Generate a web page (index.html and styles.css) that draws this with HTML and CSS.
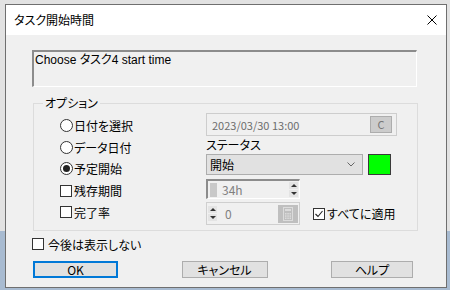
FILE: index.html
```html
<!DOCTYPE html>
<html lang="ja">
<head>
  <meta charset="UTF-8">
  <title>タスク開始時間</title>
  <link rel="stylesheet" href="styles.css">
</head>
<body>

<div class="window">
  <div class="titlebar">
    <span class="title">タスク開始時間</span>
    <svg class="close" viewBox="0 0 10 10" width="10" height="10">
      <path d="M0.5 0.5 L9.5 9.5 M9.5 0.5 L0.5 9.5" stroke="#000" stroke-width="1" fill="none"/>
    </svg>
  </div>

  <div class="content">
    <div class="desc">Choose タスク4 start time</div>

    <fieldset class="options">
      <legend>オプション</legend>
      <div class="cols">
        <div class="left">
          <label class="opt"><span class="radio"></span>日付を選択</label>
          <label class="opt"><span class="radio"></span>データ日付</label>
          <label class="opt"><span class="radio on"></span>予定開始</label>
          <label class="opt"><span class="check"></span>残存期間</label>
          <label class="opt"><span class="check"></span>完了率</label>
        </div>

        <div class="right">
          <div class="date">
            <span>2023/03/30 13:00</span>
            <span class="cbtn">C</span>
          </div>
          <div class="status-label">ステータス</div>
          <div class="status-row">
            <div class="select">
              <span>開始</span>
              <svg viewBox="0 0 8 5" width="8" height="5">
                <path d="M0.5 0.5 L4 4 L7.5 0.5" stroke="#666" fill="none"/>
              </svg>
            </div>
            <span class="swatch"></span>
          </div>
          <div class="spin spin-dur">
            <span class="block"></span>
            <span class="val">34h</span>
            <span class="arrows"><span class="up"></span><span class="down"></span></span>
          </div>
          <div class="pct-row">
            <div class="spin spin-pct">
              <span class="arrows"><span class="up"></span><span class="down"></span></span>
              <span class="val">0</span>
              <span class="calc">
                <svg viewBox="0 0 20 18" width="20" height="18">
                  <rect x="5.5" y="2.5" width="9" height="13" fill="none" stroke="#dcdcdc"/>
                  <rect x="7" y="4" width="6" height="2" fill="#dcdcdc"/>
                  <rect x="7" y="8" width="1.5" height="1.5" fill="#dcdcdc"/>
                  <rect x="9.3" y="8" width="1.5" height="1.5" fill="#dcdcdc"/>
                  <rect x="11.5" y="8" width="1.5" height="1.5" fill="#dcdcdc"/>
                  <rect x="7" y="10.3" width="1.5" height="1.5" fill="#dcdcdc"/>
                  <rect x="9.3" y="10.3" width="1.5" height="1.5" fill="#dcdcdc"/>
                  <rect x="11.5" y="10.3" width="1.5" height="1.5" fill="#dcdcdc"/>
                  <rect x="7" y="12.5" width="1.5" height="1.5" fill="#dcdcdc"/>
                  <rect x="9.3" y="12.5" width="1.5" height="1.5" fill="#dcdcdc"/>
                  <rect x="11.5" y="12.5" width="1.5" height="1.5" fill="#dcdcdc"/>
                </svg>
              </span>
            </div>
            <label class="opt apply">
              <span class="check">
                <svg viewBox="0 0 10 10" width="10" height="10">
                  <path d="M1.5 5 L4 7.5 L8.5 2" stroke="#222" stroke-width="1.1" fill="none"/>
                </svg>
              </span>すべてに適用
            </label>
          </div>
        </div>
      </div>
    </fieldset>

    <label class="opt dontshow"><span class="check"></span>今後は表示しない</label>

    <div class="buttons">
      <button class="btn default ok">OK</button>
      <button class="btn cancel">キャンセル</button>
      <button class="btn help">ヘルプ</button>
    </div>
  </div>
</div>

</body>
</html>
```

FILE: styles.css
```css
* { box-sizing: border-box; margin: 0; padding: 0; }
body {
  width: 450px; height: 290px; overflow: hidden;
  padding: 4px 0 0 5px;
  background: linear-gradient(#e2e2e2 0, #e2e2e2 231px, #a8bbd1 231px);
  font-family: "Noto Sans CJK JP", "Liberation Sans", sans-serif;
  font-size: 12px;
  font-feature-settings: "palt";
  color: #000;
}

.window {
  width: 442px;
  height: 284px;
  border: 1px solid #6f6f6f;
  background: #f0f0f0;
}

/* タイトルバー */
.titlebar {
  height: 30px;
  background: #fff;
  display: flex;
  align-items: center;
  justify-content: space-between;
  padding: 0 9px 0 8px;
}
.title { line-height: 16px; }
.close { display: block; }

.content { padding: 15px 0 0 26px; }

.desc {
  width: 385px;
  height: 37px;
  border-top: 2px solid #8c8c8c;
  border-left: 2px solid #8c8c8c;
  border-right: 1px solid #fff;
  border-bottom: 1px solid #fff;
  padding: 1px;
  line-height: 14px;
  font-family: "Liberation Sans", "Noto Sans CJK JP", sans-serif;
}

/* オプション枠 */
.options {
  margin: 9px 0 0 1px;
  width: 385px;
  border: 1px solid #dcdcdc;
  padding: 3px 0 5px 0;
}
.options legend {
  margin-left: 9px;
  padding: 0 2px;
  line-height: 14px;
}
.cols { display: flex; padding-left: 26px; }
.left { width: 146px; padding-top: 1.5px; }

.opt {
  display: flex;
  align-items: center;
  gap: 1px;
  height: 21.75px;
  white-space: nowrap;
}
.radio {
  width: 13px; height: 13px;
  border: 1px solid #333;
  border-radius: 50%;
  background: #fff;
  display: flex; align-items: center; justify-content: center;
}
.radio.on::after {
  content: "";
  width: 7px; height: 7px;
  border-radius: 50%;
  background: #222;
}
.check {
  width: 12px; height: 12px;
  margin-right: 1px;
  border: 1px solid #333;
  background: #fff;
  display: flex; align-items: center; justify-content: center;
}

/* 右側 */
.right { width: 191px; }
.date {
  height: 23px;
  border: 1px solid #cdcdcd;
  display: flex;
  align-items: center;
  justify-content: space-between;
  padding: 0 4px 0 5px;
  color: #6d6d6d;
  font-size: 11px;
}
.cbtn {
  width: 22px; height: 17px;
  background: #ccc;
  border: 1px solid #adadad;
  color: #777;
  text-align: center;
  line-height: 15px;
}
.status-label { height: 18px; line-height: 18px; }
.status-row { display: flex; gap: 5px; }
.select {
  width: 157px; height: 21px;
  background: #e1e1e1;
  border: 1px solid #adadad;
  display: flex;
  align-items: center;
  justify-content: space-between;
  padding: 0 7px 0 3px;
}
.select svg { display: block; }
.swatch {
  width: 23px; height: 21px;
  border: 1px solid #3a3a3a;
  background: #00ff00;
}

.spin { width: 94px; display: flex; align-items: center; color: #808080; }
.spin-dur {
  height: 20px;
  margin-top: 4px;
  border-top: 2px solid #8c8c8c;
  border-left: 2px solid #8c8c8c;
  border-right: 1px solid #fff;
  border-bottom: 1px solid #fff;
  padding: 0 1px 0 2px;
}
.spin-dur .block { width: 7px; height: 14px; background: #c8c8c8; margin-right: 5px; }
.spin-dur .val { flex: 1; }
.arrows { display: flex; flex-direction: column; gap: 1px; }
.arrows span {
  width: 9px; height: 7px;
  background: #e4e4e4;
  display: flex; align-items: center; justify-content: center;
}
.up::after, .down::after {
  content: "";
  border-left: 3px solid transparent;
  border-right: 3px solid transparent;
}
.up::after { border-bottom: 3px solid #333; }
.down::after { border-top: 3px solid #333; }

.pct-row { display: flex; align-items: center; margin-top: 3px; }
.spin-pct {
  height: 23px;
  border: 1px solid #cfcfcf;
  padding: 0 1px;
}
.spin-pct .val { flex: 1; margin-left: 8px; }
.calc { width: 20px; height: 18px; background: #bfbfbf; }
.calc svg { display: block; }
.apply { margin-left: 13px; gap: 2px; }
.apply .check { margin-right: 0; }
.apply .check svg { display: block; }

.dontshow { margin-top: 5px; height: 16px; gap: 3px; }

/* ボタン */
.buttons {
  margin: 9px 0 0 1px;
  width: 380px;
  display: flex;
  justify-content: space-between;
}
.btn {
  height: 17px;
  background: #e1e1e1;
  border: 1px solid #adadad;
  font: inherit;
  line-height: 15px;
  color: #000;
}
.btn.default { border: 2px solid #0078d7; line-height: 13px; }
.ok { width: 85px; }
.cancel { width: 86px; }
.help { width: 82px; }
```
